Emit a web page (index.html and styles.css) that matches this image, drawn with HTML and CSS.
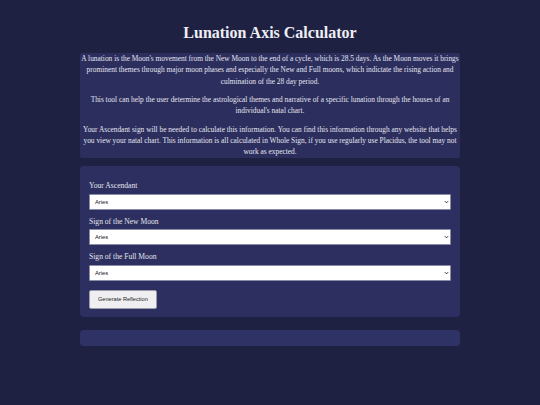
FILE: index.html
```html
<!DOCTYPE html>
<html lang="en">
<head>
<meta charset="utf-8">
<title>Lunation Axis Calculator</title>
<link rel="stylesheet" href="styles.css">
</head>
<body>
<main class="page">
  <h1 class="title">Lunation Axis Calculator</h1>
  <section class="intro">
    <p>A lunation is the Moon's movement from the New Moon to the end of a cycle, which is 28.5 days. As the Moon moves it brings prominent themes through major moon phases and especially the New and Full moons, which indictate the rising action and culmination of the 28 day period.</p>
    <p>This tool can help the user determine the astrological themes and narrative of a specific lunation through the houses of an individual's natal chart.</p>
    <p>Your Ascendant sign will be needed to calculate this information. You can find this information through any website that helps you view your natal chart. This information is all calculated in Whole Sign, if you use regularly use Placidus, the tool may not work as expected.</p>
  </section>
  <form class="card form">
    <label class="label" for="asc">Your Ascendant</label>
    <div class="select-wrap">
      <select class="select" id="asc"><option>Aries</option></select>
      <svg class="chev" viewBox="0 0 6 4" aria-hidden="true"><path d="M1 1 L3 3 L5 1" fill="none" stroke="#222" stroke-width="1.1"/></svg>
    </div>
    <label class="label" for="new">Sign of the New Moon</label>
    <div class="select-wrap">
      <select class="select" id="new"><option>Aries</option></select>
      <svg class="chev" viewBox="0 0 6 4" aria-hidden="true"><path d="M1 1 L3 3 L5 1" fill="none" stroke="#222" stroke-width="1.1"/></svg>
    </div>
    <label class="label" for="full">Sign of the Full Moon</label>
    <div class="select-wrap">
      <select class="select" id="full"><option>Aries</option></select>
      <svg class="chev" viewBox="0 0 6 4" aria-hidden="true"><path d="M1 1 L3 3 L5 1" fill="none" stroke="#222" stroke-width="1.1"/></svg>
    </div>
    <div class="actions"><button type="button" class="btn">Generate Reflection</button></div>
  </form>
  <section class="card result"></section>
</main>
</body>
</html>
```

FILE: styles.css
```css
html, body {
  margin: 0;
  padding: 0;
  background: #1f2143;
}
body {
  font-family: "Liberation Serif", "Times New Roman", serif;
  color: #e4e4ee;
}
.page {
  width: 380px;
  margin: 0 auto;
  padding-top: 23px;
  display: flex;
  flex-direction: column;
}
.title {
  margin: 0 0 10px;
  font-size: 16px;
  line-height: 20px;
  font-weight: bold;
  text-align: center;
  color: #eeeef5;
}
.intro {
  background: #2c2f5e;
  border-radius: 2px;
  padding: 0 1px;
  text-align: center;
  font-size: 7.4px;
  line-height: 11.4px;
}
.intro p {
  margin: 6.8px 0 0;
}
.intro p:first-child {
  margin-top: 0;
}
.card {
  background: #2c2f5f;
  border-radius: 4px;
}
.form {
  margin-top: 8px;
  padding: 14px 9px 8px;
  display: flex;
  flex-direction: column;
}
.label {
  font-size: 7.6px;
  line-height: 11.4px;
  color: #e4e4ee;
  margin-bottom: 2.3px;
}
.select-wrap {
  position: relative;
  display: flex;
  margin: 0 0 6px;
}
.select {
  flex: 1;
  height: 16px;
  margin: 0;
  padding: 0 5px;
  font-family: "Liberation Sans", Arial, sans-serif;
  font-size: 5.8px;
  color: #111;
  background: #fff;
  border: 1px solid #8a8ca8;
  border-radius: 1px;
  appearance: none;
  -webkit-appearance: none;
}
.chev {
  position: absolute;
  right: 2.5px;
  top: 6px;
  width: 5px;
  height: 4px;
  pointer-events: none;
}
.actions {
  display: flex;
  margin-top: 3px;
}
.btn {
  height: 19px;
  padding: 0 8px;
  font-family: "Liberation Sans", Arial, sans-serif;
  font-size: 5.6px;
  color: #222;
  background: #efeff1;
  border: 1px solid #9a9aa8;
  border-radius: 2px;
}
.result {
  margin-top: 13px;
  height: 16px;
  background: #2f3264;
}
```
